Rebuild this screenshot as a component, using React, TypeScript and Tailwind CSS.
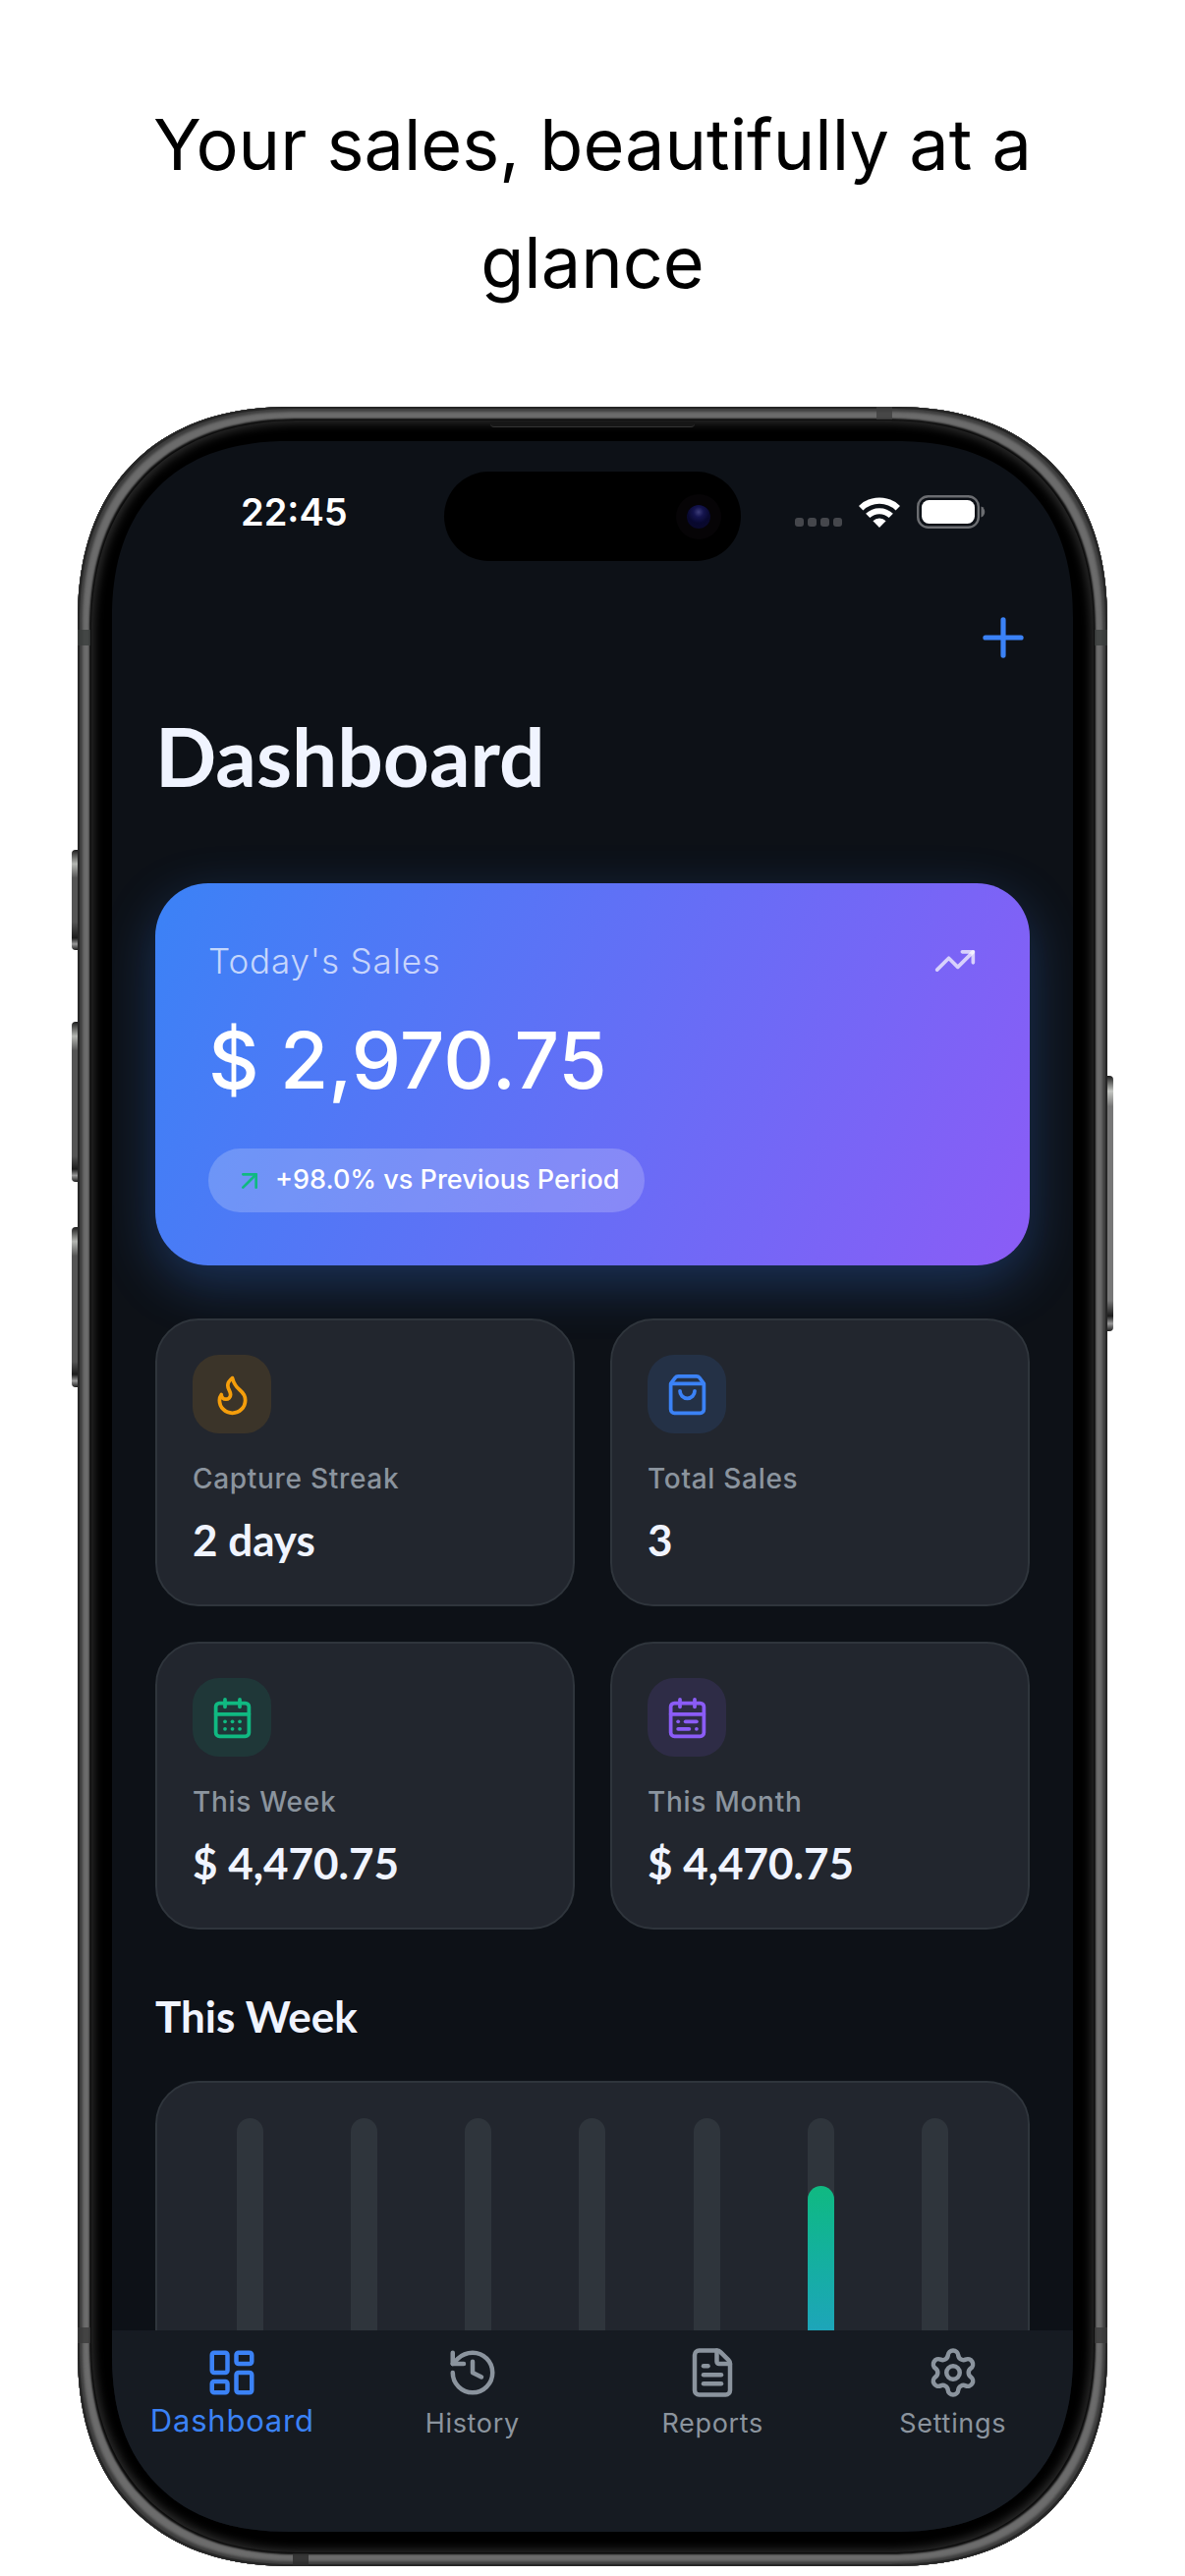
import {
  ArrowUpRight,
  CalendarDays,
  CalendarRange,
  FileText,
  Flame,
  History,
  LayoutDashboard,
  Plus,
  Settings,
  ShoppingBag,
  TrendingUp,
} from 'lucide-react';

const stats = [
  { label: 'Capture Streak', value: '2 days', icon: Flame, tint: 'bg-[#f59e0b]/12 text-[#f59e0b]' },
  { label: 'Total Sales', value: '3', icon: ShoppingBag, tint: 'bg-[#3b82f6]/12 text-[#3b82f6]' },
  { label: 'This Week', value: '$ 4,470.75', icon: CalendarDays, tint: 'bg-[#10b981]/12 text-[#10b981]' },
  { label: 'This Month', value: '$ 4,470.75', icon: CalendarRange, tint: 'bg-[#8b5cf6]/12 text-[#8b5cf6]' },
];

const week = [
  { day: 'Mon', percent: 0 },
  { day: 'Tue', percent: 0 },
  { day: 'Wed', percent: 0 },
  { day: 'Thu', percent: 0 },
  { day: 'Fri', percent: 0 },
  { day: 'Sat', percent: 83 },
  { day: 'Sun', percent: 0 },
];

const tabs = [
  { label: 'Dashboard', icon: LayoutDashboard, active: true },
  { label: 'History', icon: History, active: false },
  { label: 'Reports', icon: FileText, active: false },
  { label: 'Settings', icon: Settings, active: false },
];

function WifiIcon() {
  return (
    <svg className="h-[31px] w-[42px]" viewBox="0 0 42 31" fill="none" aria-hidden="true">
      <path d="M2.2 11.2a27 27 0 0 1 37.6 0" stroke="white" strokeWidth="6.4" />
      <path d="M9.2 18.9a17 17 0 0 1 23.6 0" stroke="white" strokeWidth="6" />
      <path d="M21 31l-6.6-6.8a9.6 9.6 0 0 1 13.2 0z" fill="white" />
    </svg>
  );
}

function BatteryIcon() {
  return (
    <svg className="h-[34px] w-[70px]" viewBox="0 0 70 34" fill="none" aria-hidden="true">
      <rect x="1.2" y="1.2" width="61.6" height="31.6" rx="10.5" stroke="#6b6d71" strokeWidth="2.4" />
      <rect x="5" y="5" width="54" height="24" rx="7.5" fill="white" />
      <path d="M65.5 11.5c5 1.6 5 9.4 0 11z" fill="#6b6d71" />
    </svg>
  );
}

function StatusBar() {
  return (
    <div className="relative flex h-36 shrink-0 items-center justify-between pr-[89px] pl-[131px]">
      <span className="text-[38px] leading-none font-semibold text-white">22:45</span>
      <div className="flex items-center gap-[17px]">
        <div className="flex gap-1 pt-5">
          <span className="size-[9px] rounded-[3px] bg-[#45474c]" />
          <span className="size-[9px] rounded-[3px] bg-[#45474c]" />
          <span className="size-[9px] rounded-[3px] bg-[#45474c]" />
          <span className="size-[9px] rounded-[3px] bg-[#45474c]" />
        </div>
        <WifiIcon />
        <BatteryIcon />
      </div>

      {/* dynamic island */}
      <div className="absolute top-[31px] left-1/2 flex h-[91px] w-[302px] -translate-x-1/2 items-center justify-end rounded-full bg-black pr-[31px]">
        <span className="size-6 rounded-full bg-[radial-gradient(circle_at_50%_30%,#3c3c78_0%,#14144e_25%,#08082e_55%,#0c0a2a_100%)] shadow-[0_0_0_11px_#060406]" />
      </div>
    </div>
  );
}

function HeroCard() {
  return (
    <section className="rounded-[54px] bg-linear-[114deg] from-[#3b82f6] to-[#8b5cf6] p-[54px] shadow-[0_18px_54px_rgba(59,130,246,0.3)]">
      <div className="flex items-center justify-between text-white/70">
        <h2 className="text-[35px] leading-[50px] font-light tracking-wide">Today's Sales</h2>
        <TrendingUp size={44} />
      </div>
      <p className="mt-[26px] text-[80px] leading-[100px] font-medium text-white">$ 2,970.75</p>
      <div className="mt-10 flex h-[65px] w-fit items-center gap-2.5 rounded-full bg-white/20 px-[26px]">
        <ArrowUpRight size={32} className="text-[#10b981]" />
        <span className="text-[27px] font-medium text-white">+98.0% vs Previous Period</span>
      </div>
    </section>
  );
}

function StatCard({ label, value, icon: Icon, tint }: (typeof stats)[number]) {
  return (
    <div className="rounded-[44px] border-2 border-[#2f353c] bg-[#22262e] px-9 pt-[35px] pb-[38px]">
      <div className={`flex size-20 items-center justify-center rounded-[27px] ${tint}`}>
        <Icon size={45} />
      </div>
      <h3 className="mt-7 text-[28px] leading-9 font-medium tracking-wide text-[#8b949e]">{label}</h3>
      <p className="mt-4 font-['Lato',sans-serif] text-[44px] leading-[56px] font-bold text-[#f0f4ff]">{value}</p>
    </div>
  );
}

function WeekChart() {
  return (
    <div className="mt-[38px] grid grid-cols-7 justify-items-center rounded-[44px] border-2 border-[#2f353c] bg-[#22262e] p-9">
      {week.map((d) => (
        <div key={d.day} className="flex h-[403px] w-[27px] items-end overflow-hidden rounded-full bg-[#2f353c]">
          <div
            className="w-full rounded-full bg-linear-to-b from-[#10b981] to-[#3b82f6]"
            style={{ height: `${d.percent}%` }}
          />
        </div>
      ))}
    </div>
  );
}

function TabBar() {
  return (
    <nav className="grid shrink-0 grid-cols-4 bg-[#161b22] pt-4 pb-[85px]">
      {tabs.map(({ label, icon: Icon, active }) => (
        <a
          key={label}
          href={`#${label.toLowerCase()}`}
          className={`flex flex-col items-center ${active ? 'text-[#3b82f6]' : 'text-[#8b949e]'}`}
        >
          <Icon size={54} />
          <span className={`tracking-wide ${active ? 'text-[31px] leading-[44px]' : 'text-[27px] leading-[50px]'}`}>
            {label}
          </span>
        </a>
      ))}
    </nav>
  );
}

function PhoneFrame({ children }: { children: React.ReactNode }) {
  return (
    <div className="relative">
      {/* side buttons */}
      <span className="absolute top-[20.5%] -left-1.5 h-[102px] w-2 rounded-l-sm bg-[linear-gradient(#1c1c1c,#b4b6b2_14%,#555_28%,#555_72%,#1c1c1c_88%,#999_94%,#1c1c1c)]" />
      <span className="absolute top-[28.5%] -left-1.5 h-[163px] w-2 rounded-l-sm bg-[linear-gradient(#1c1c1c,#b4b6b2_9%,#555_18%,#555_84%,#1c1c1c_92%,#999_96%,#1c1c1c)]" />
      <span className="absolute top-[38%] -left-1.5 h-[163px] w-2 rounded-l-sm bg-[linear-gradient(#1c1c1c,#b4b6b2_9%,#555_18%,#555_84%,#1c1c1c_92%,#999_96%,#1c1c1c)]" />
      <span className="absolute top-[31%] -right-1.5 h-[260px] w-2 rounded-r-sm bg-[linear-gradient(#1c1c1c,#c4c6c2_6%,#777_12%,#777_88%,#1c1c1c_94%,#999_97%,#1c1c1c)]" />

      <div className="relative rounded-[190px] bg-black p-[35px] shadow-[inset_0_0_0_2px_#262626,inset_0_0_3px_5px_#3c3c3c,inset_0_0_2px_12px_#6c6c6c,inset_0_0_0_14px_#0a0a0a,inset_0_0_10px_17px_#2b2b2b] supports-[corner-shape:squircle]:rounded-[219px] supports-[corner-shape:squircle]:[corner-shape:superellipse(1.2)]">
        {/* antenna bands and earpiece */}
        <span className="absolute top-[227px] left-0 h-4 w-[13px] bg-[#3a3d3c]/80" />
        <span className="absolute top-[227px] right-0 h-4 w-[13px] bg-[#3a3d3c]/80" />
        <span className="absolute bottom-[227px] left-0 h-4 w-[13px] bg-[#3a3a3a]/80" />
        <span className="absolute right-0 bottom-[227px] h-4 w-[13px] bg-[#3a3a3a]/80" />
        <span className="absolute top-0 right-[219px] h-[13px] w-4 bg-[#3f3f3f]/80" />
        <span className="absolute bottom-0 left-[219px] h-[13px] w-4 bg-[#2a2a2a]/80" />
        <span className="absolute top-[15px] left-1/2 h-1.5 w-[208px] -translate-x-1/2 rounded-b-sm border-b border-[#333] bg-[#161616]" />

        <div className="flex aspect-[978/2128] flex-col overflow-hidden rounded-[155px] bg-[#0d1117] supports-[corner-shape:squircle]:rounded-[180px] supports-[corner-shape:squircle]:[corner-shape:superellipse(1.2)]">
          {children}
        </div>
      </div>
    </div>
  );
}

export default function App() {
  return (
    <main className="bg-white px-[79px] pt-[87px] pb-2.5 font-['Inter',sans-serif]">
      <h1 className="px-8 text-center text-[72px] leading-[120px] text-black">
        Your sales, beautifully at a glance
      </h1>

      <div className="mt-[87px]">
        <PhoneFrame>
          <StatusBar />
          <div className="min-h-0 flex-1 overflow-hidden px-11">
            <div className="flex h-28 items-center justify-end">
              <button type="button" aria-label="Add sale" className="-mr-1 text-[#3b82f6]">
                <Plus size={62} />
              </button>
            </div>
            <h2 className="pt-4 pb-[82px] font-['Lato',sans-serif] text-[82px] leading-[96px] font-bold text-[#f0f4ff]">
              Dashboard
            </h2>
            <HeroCard />
            <div className="mt-[54px] grid grid-cols-2 gap-9">
              {stats.map((stat) => (
                <StatCard key={stat.label} {...stat} />
              ))}
            </div>
            <h2 className="mt-[60px] font-['Lato',sans-serif] text-[44px] leading-[56px] font-bold text-[#f0f4ff]">
              This Week
            </h2>
            <WeekChart />
          </div>
          <TabBar />
        </PhoneFrame>
      </div>
    </main>
  );
}
